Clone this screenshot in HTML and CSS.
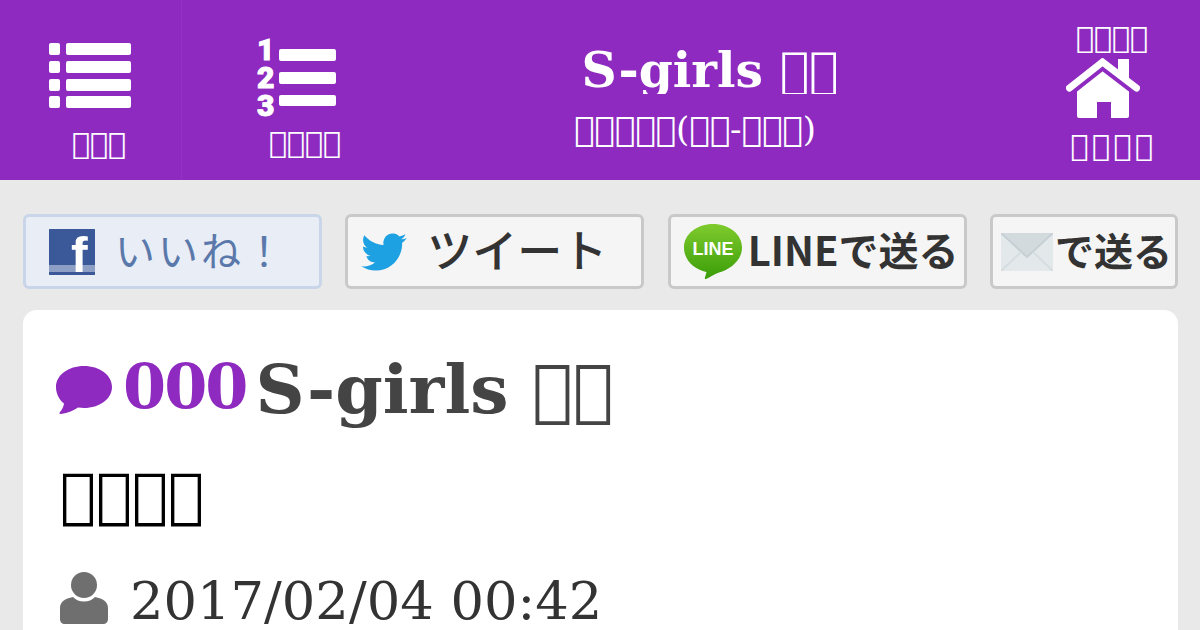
FILE: index.html
```html
<!DOCTYPE html>
<html lang="ja">
<head>
    <meta charset="UTF-8">
    <meta name="viewport" content="width=device-width, initial-scale=1.0">
    <title>S-girls</title>
    <link rel="stylesheet" href="styles.css">
</head>
<body>
    <header class="header">
        <div class="nav nav-menu">
            <svg class="icon-list" width="84" height="66" viewBox="0 0 84 66">
                <rect x="1" y="0" width="11" height="12" rx="2"/><rect x="18" y="0" width="65" height="12" rx="2"/>
                <rect x="1" y="18" width="11" height="12" rx="2"/><rect x="18" y="18" width="65" height="12" rx="2"/>
                <rect x="1" y="36" width="11" height="12" rx="2"/><rect x="18" y="36" width="65" height="12" rx="2"/>
                <rect x="1" y="53" width="11" height="12" rx="2"/><rect x="18" y="53" width="65" height="12" rx="2"/>
            </svg>
            <p class="nav-label">&#xE000;&#xE000;&#xE000;</p>
        </div>
        <div class="nav nav-rank">
            <svg class="icon-rank" width="80" height="82" viewBox="0 0 80 82">
                <text x="0" y="22" class="rank-num">1</text>
                <text x="0" y="50" class="rank-num">2</text>
                <text x="0" y="78" class="rank-num">3</text>
                <rect x="22" y="11" width="57" height="12" rx="2"/>
                <rect x="22" y="34" width="57" height="12" rx="2"/>
                <rect x="22" y="57" width="57" height="11" rx="2"/>
            </svg>
            <p class="nav-label">&#xE000;&#xE000;&#xE000;&#xE000;</p>
        </div>
        <div class="brand">
            <h1 class="brand-title">S-girls &#xE000;&#xE000;</h1>
            <p class="brand-sub">&#xE000;&#xE000;&#xE000;&#xE000;&#xE000;(&#xE000;&#xE000;-&#xE000;&#xE000;&#xE000;)</p>
        </div>
        <div class="nav nav-home">
            <p class="nav-label">&#xE000;&#xE000;&#xE000;&#xE000;</p>
            <svg class="icon-home" width="74" height="62" viewBox="0 0 74 62">
                <path d="M52 1h11v22H52z" fill="#fff"/>
                <path d="M11 31 L36.500 11 L63 31 V58 a2 2 0 0 1 -2 2 H45 V44 H31 V60 H13 a2 2 0 0 1 -2 -2 Z" fill="#fff"/>
                <path d="M3.500 33 L36.500 7 L70.500 33" fill="none" stroke="#8e2abf" stroke-width="10"/>
                <path d="M3.500 30 L36.500 4 L70.500 30" fill="none" stroke="#fff" stroke-width="7" stroke-linecap="round"/>
            </svg>
            <p class="nav-label nav-label-wide">&#xE000;&#xE000;&#xE000;&#xE000;</p>
        </div>
    </header>

    <div class="share">
        <a class="btn btn-fb">
            <svg width="46" height="46" viewBox="0 0 46 46">
                <rect width="46" height="46" fill="#3b5998"/>
                <rect y="36" width="46" height="7" fill="#8d9fc4"/>
                <text x="22" y="43" class="fb-f">f</text>
            </svg>
            <span>いいね！</span>
        </a>
        <a class="btn btn-tw">
            <svg width="46" height="38" viewBox="0 0 24 20">
                <path fill="#1da1e2" d="M23.953 2.57a10 10 0 01-2.825.775 4.958 4.958 0 002.163-2.723c-.951.555-2.005.959-3.127 1.184a4.92 4.92 0 00-8.384 4.482C7.69 6.095 4.067 4.13 1.64 1.162a4.822 4.822 0 00-.666 2.475c0 1.71.87 3.213 2.188 4.096a4.904 4.904 0 01-2.228-.616v.06a4.923 4.923 0 003.946 4.827 4.996 4.996 0 01-2.212.085 4.936 4.936 0 004.604 3.417 9.867 9.867 0 01-6.102 2.105c-.39 0-.779-.023-1.17-.067a13.995 13.995 0 007.557 2.209c9.053 0 13.998-7.496 13.998-13.985 0-.21 0-.42-.015-.63A9.935 9.935 0 0024 2.59z"/>
            </svg>
            <span>ツイート</span>
        </a>
        <a class="btn btn-line">
            <svg width="58" height="55" viewBox="0 0 58 55">
                <defs>
                    <linearGradient id="line-green" x1="0" y1="0" x2="0" y2="1">
                        <stop offset="0" stop-color="#7fcb2e"/>
                        <stop offset="1" stop-color="#3a9d08"/>
                    </linearGradient>
                </defs>
                <path fill="url(#line-green)" d="M29 0c16 0 29 10 29 23.500 0 13-12 22-23 25-5 1.500-9 5-13 6.500-1 .3-1.500-.5-1-1.500l1.500-5.500C10 45.500 0 36 0 23.500 0 10 13 0 29 0z"/>
                <text x="29" y="31" class="line-mark">LINE</text>
            </svg>
            <span>LINEで送る</span>
        </a>
        <a class="btn btn-mail">
            <svg width="52" height="38" viewBox="0 0 52 38">
                <rect width="52" height="38" fill="#e3e8ea"/>
                <path d="M0 0h52L26 24z" fill="#d3dade"/>
                <path d="M0 0L26 24 52 0" fill="none" stroke="#c6cfd4" stroke-width="2"/>
                <path d="M0 38L20 19M52 38L32 19" stroke="#d6dde0" stroke-width="2"/>
            </svg>
            <span>で送る</span>
        </a>
    </div>

    <main class="card">
        <div class="thread-head">
            <svg class="icon-bubble" width="56" height="48" viewBox="0 0 56 48">
                <path fill="#8e2abf" d="M28 0c15.500 0 28 9 28 21S43.500 42 28 42c-2 0-4-.1-6-.4C18 44 12 47.500 5 48c-1.500.1-2-1-1-2 2-2 3.500-5 4-8.500C3 33.500 0 27.500 0 21 0 9 12.500 0 28 0z"/>
            </svg>
            <span class="thread-no">000</span>
            <h2 class="thread-title">S-girls &#xE000;&#xE000;</h2>
        </div>
        <p class="thread-body">&#xE000;&#xE000;&#xE000;&#xE000;</p>
        <div class="meta">
            <svg class="icon-user" width="48" height="52" viewBox="0 0 48 52">
                <circle cx="24" cy="13" r="13" fill="#6f6f6f"/>
                <path fill="#6f6f6f" d="M13 25c3 3 6.500 4.500 11 4.500S32 28 35 25c8 1.500 13 5 13 11v11c0 3-2 5-5 5H5c-3 0-5-2-5-5V36c0-6 5-9.500 13-11z"/>
            </svg>
            <span class="meta-date">2017/02/04 00:42</span>
        </div>
    </main>
</body>
</html>
```

FILE: styles.css
```css
html,body{
    margin: 0;
    height: 630px;
    overflow: hidden;
}
body{
    background: #e9e9e9;
    font-family: "DejaVu Serif", serif;
    color: #333;
}
p,h1,h2{
    margin: 0;
}

/* header */
.header{
    display: flex;
    height: 180px;
    background: #8e2abf;
    color: #fff;
}
.nav{
    display: flex;
    flex-direction: column;
    box-sizing: border-box;
}
.nav svg{
    display: block;
    fill: #fff;
}
.nav-label{
    font-size: 30px;
    line-height: 36px;
}
.nav-menu{
    width: 182px;
    padding: 43px 0 0 48px;
    border-right: 1px solid #9433c3;
}
.nav-menu .nav-label{
    margin: 17px 0 0 24px;
}
.nav-rank{
    width: 230px;
    padding: 38px 0 0 75px;
}
.nav-rank .nav-label{
    margin: 5px 0 0 12px;
}
.rank-num{
    font-family: "Roboto", sans-serif;
    font-weight: 900;
    font-size: 30px;
    stroke: #fff;
    stroke-width: 1px;
    fill: #fff;
}
.brand{
    width: 596px;
    padding-top: 41px;
    box-sizing: border-box;
    text-align: center;
}
.brand-title{
    height: 53px;
    overflow: hidden;
    font-size: 48.8px;
    line-height: 58px;
    font-weight: bold;
}
.brand-sub{
    margin: 15px 0 0 -30px;
    font-size: 34px;
    line-height: 40px;
}
.nav-home{
    width: 192px;
    padding-top: 20px;
    align-items: center;
}
.nav-home .nav-label{
    margin-left: 16px;
}
.icon-home{
    margin: 2px 0 0 -2px;
}
.nav-home .nav-label-wide{
    margin-top: 8px;
    letter-spacing: 3.5px;
    margin-left: 19px;
}

/* share buttons */
.share{
    display: flex;
    justify-content: space-between;
    padding: 34px 22px 0 23px;
}
.btn{
    display: flex;
    align-items: center;
    box-sizing: border-box;
    width: 299px;
    height: 75px;
    border: 3px solid #c9c9c9;
    border-radius: 6px;
    background: #f5f5f5;
    font-family: "Noto Sans CJK JP", sans-serif;
    color: #333;
}
.btn svg{
    flex: none;
}
.btn span{
    margin-top: -6px;
}
.btn-fb{
    padding-left: 23px;
    gap: 20px;
    border-color: #c9d5e8;
    background: #e8edf6;
    color: #5a78aa;
    font-size: 40px;
    letter-spacing: 3px;
}
.fb-f{
    font-family: "Liberation Sans", sans-serif;
    font-weight: bold;
    font-size: 50px;
    fill: #fff;
}
.btn-tw{
    padding-left: 13px;
    gap: 20px;
    font-size: 45px;
    font-weight: 500;
}
.btn-line{
    padding-left: 13px;
    gap: 6px;
    font-size: 40px;
    font-weight: 700;
}
.line-mark{
    font-family: "Liberation Sans", sans-serif;
    font-weight: bold;
    font-size: 18px;
    text-anchor: middle;
    fill: #fff;
}
.btn-mail{
    width: 188px;
    padding-left: 8px;
    gap: 2px;
    font-size: 39px;
    font-weight: 700;
}

/* thread card */
.card{
    margin: 21px 22px 0 23px;
    padding: 40px 33px 0;
    height: 320px;
    box-sizing: border-box;
    background: #fff;
    border-radius: 14px 14px 0 0;
}
.thread-head{
    display: flex;
    align-items: center;
    height: 80px;
}
.thread-no{
    margin: -6px 0 0 11px;
    font-size: 62px;
    line-height: 70px;
    letter-spacing: -2px;
    font-weight: bold;
    color: #8e2abf;
}
.thread-title{
    margin: -2px 0 0 9px;
    font-size: 68px;
    line-height: 80px;
    color: #444;
}
.thread-body{
    margin: 30px 0 0 4px;
    font-size: 60px;
    line-height: 70px;
    color: #000;
}
.meta{
    display: flex;
    align-items: center;
    gap: 22px;
    margin: 41px 0 0 4px;
}
.icon-user{
    margin-bottom: 6px;
}
.meta-date{
    font-size: 52.700px;
    line-height: 60px;
}
```
